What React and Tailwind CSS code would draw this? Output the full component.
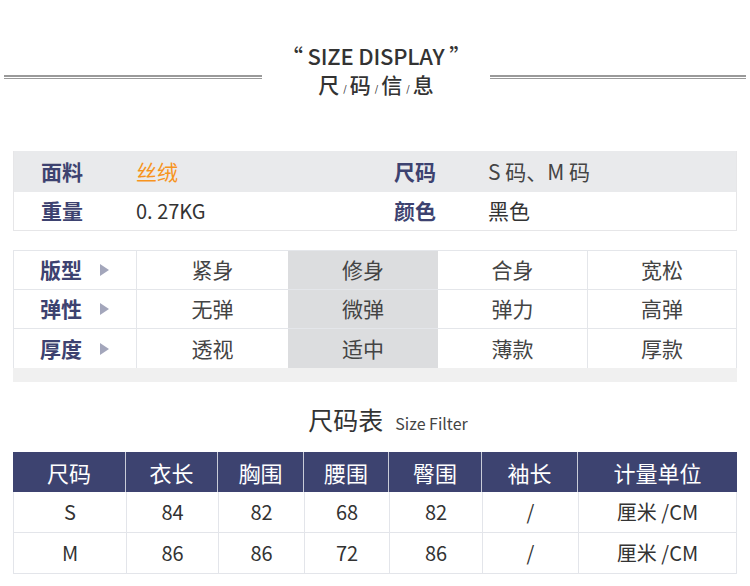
const FONT = { fontFamily: '"Noto Sans CJK SC", "Noto Sans", sans-serif' }

const FIT = [
  { label: '版型', opts: ['紧身', '修身', '合身', '宽松'] },
  { label: '弹性', opts: ['无弹', '微弹', '弹力', '高弹'] },
  { label: '厚度', opts: ['透视', '适中', '薄款', '厚款'] },
]

const COLS = [
  { name: '尺码', w: 'w-[113px]' },
  { name: '衣长', w: 'w-[92px]' },
  { name: '胸围', w: 'w-[86px]' },
  { name: '腰围', w: 'w-[85px]' },
  { name: '臀围', w: 'w-[93px]' },
  { name: '袖长', w: 'w-[96px]' },
  { name: '计量单位', w: 'flex-1' },
]

const ROWS = [
  ['S', '84', '82', '68', '82', '/', '厘米 /CM'],
  ['M', '86', '86', '72', '86', '/', '厘米 /CM'],
]

function Slash() {
  return <span className="text-[9px] leading-none ml-[4px] mr-[3px] mb-[3px]">/</span>
}

export default function App() {
  return (
    <div className="w-[750px] h-[586px] bg-white overflow-hidden text-[#333]" style={FONT}>
      {/* heading */}
      <div className="flex items-start pt-[40px] h-[140px]">
        <div className="ml-[4px] w-[258px] mt-[35px]">
          <div className="h-[2px] bg-[#9a9a9a]" />
          <div className="h-[1px] bg-[#9a9a9a] mt-[1px]" />
        </div>
        <div className="w-[228px] flex flex-col items-center">
          <p className="text-[22px] leading-[30px] font-medium tracking-[-0.2px]">“ SIZE DISPLAY ”</p>
          <div className="h-[26px] text-[21px] font-medium flex items-end">
            <span className="leading-[24px]">尺</span><Slash />
            <span className="leading-[24px]">码</span><Slash />
            <span className="leading-[24px]">信</span><Slash />
            <span className="leading-[24px]">息</span>
          </div>
        </div>
        <div className="w-[256px] mt-[35px]">
          <div className="h-[2px] bg-[#9a9a9a]" />
          <div className="h-[1px] bg-[#9a9a9a] mt-[1px]" />
        </div>
      </div>

      {/* basic info */}
      <div className="mx-[13px] mt-[11px] w-[724px] border-x border-b border-[#e6e6e8]">
        <div className="flex h-[41px] items-center bg-[#e9eaec] text-[21px]">
          <span className="w-[95px] pl-[27px] font-bold text-[#3d4270]">面料</span>
          <span className="w-[285px] pl-[27px] text-[#f7941d]">丝绒</span>
          <span className="w-[94px] font-bold text-[#3d4270]">尺码</span>
          <span className="text-[#444]">S 码、M 码</span>
        </div>
        <div className="flex h-[38px] items-center text-[21px]">
          <span className="w-[95px] pl-[27px] font-bold text-[#3d4270]">重量</span>
          <span className="w-[285px] pl-[27px] text-[#333] text-[20px]">0. 27KG</span>
          <span className="w-[94px] font-bold text-[#3d4270]">颜色</span>
          <span className="text-[#333]">黑色</span>
        </div>
      </div>

      {/* fit table */}
      <div className="mx-[13px] mt-[19px] w-[724px]">
        <div className="border-t border-x border-[#e4e6ea]">
          {FIT.map((r, i) => (
            <div key={r.label} className={`flex h-[39px] text-[21px] ${i < 2 ? 'border-b border-[#e4e6ea]' : ''}`}>
              <div className="w-[123px] flex items-center pl-[26px] border-r border-[#e4e6ea]">
                <span className="font-bold text-[#3d4270]">{r.label}</span>
                <span className="ml-[18px] w-0 h-0 border-y-[6px] border-y-transparent border-l-[9px] border-l-[#a3a6bb]" />
              </div>
              {r.opts.map((o, j) => (
                <div
                  key={o}
                  className={`flex items-center justify-center text-[#444] ${j === 0 ? 'w-[151px]' : j === 1 ? 'w-[150px] bg-[#dcdddf]' : j === 2 ? 'w-[150px] border-r border-[#e4e6ea]' : 'flex-1'}`}
                >
                  {o}
                </div>
              ))}
            </div>
          ))}
        </div>
        <div className="h-[14px] bg-[#f0f0f0]" />
      </div>

      {/* size chart */}
      <div className="flex items-baseline justify-center mt-[19px] ml-[26px] h-[41px]">
        <span className="text-[25px] text-[#333]">尺码表</span>
        <span className="text-[16px] text-[#444] ml-[12px]">Size Filter</span>
      </div>
      <div className="mx-[13px] mt-[10px] w-[724px]">
        <div className="flex h-[40px] bg-[#3d4370] text-white text-[22px]">
          {COLS.map((c, i) => (
            <div key={c.name} className={`${c.w} flex items-center justify-center ${i < COLS.length - 1 ? 'border-r border-[#c9ccd8]' : ''}`}>
              {c.name}
            </div>
          ))}
        </div>
        <div className="border-x border-b border-[#e3e5ea]">
          {ROWS.map((row, ri) => (
            <div key={ri} className={`flex text-[20px] text-[#333] ${ri === 0 ? 'h-[41px] border-b border-[#e3e5ea]' : 'h-[40px]'}`}>
              {row.map((v, i) => (
                <div key={i} className={`${COLS[i].w} flex items-center justify-center ${i < row.length - 1 ? 'border-r border-[#e3e5ea]' : ''}`}>
                  {v}
                </div>
              ))}
            </div>
          ))}
        </div>
      </div>
    </div>
  )
}
